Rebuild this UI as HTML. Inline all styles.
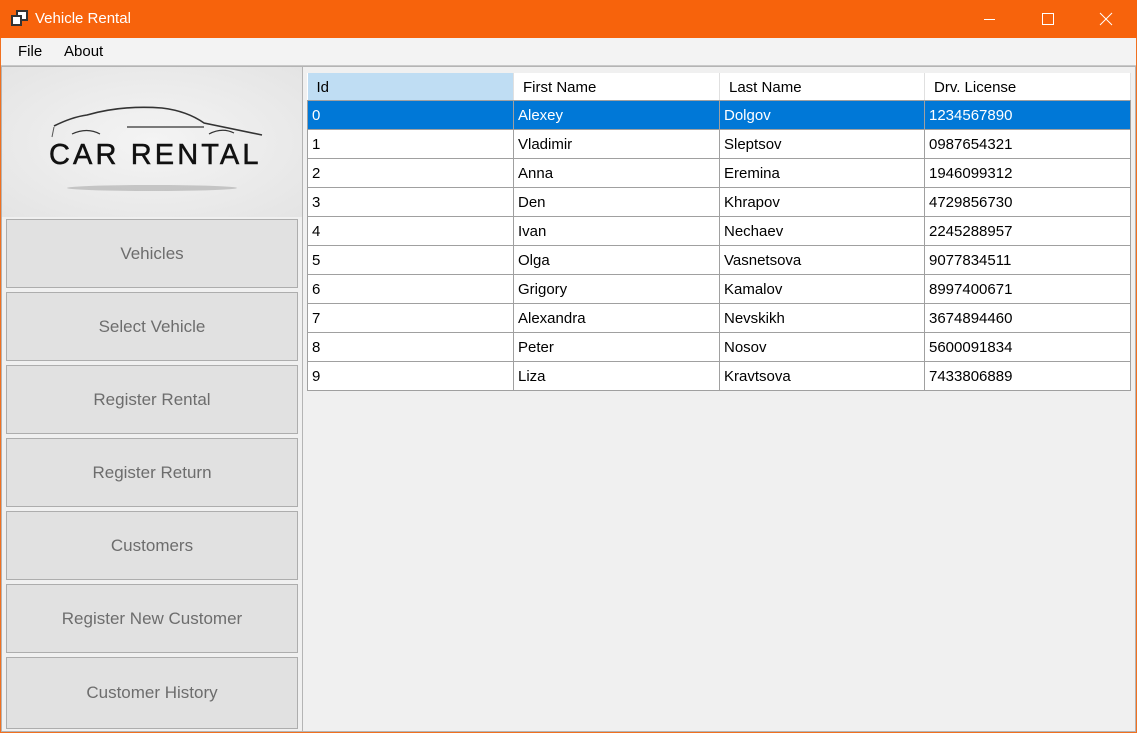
<!DOCTYPE html>
<html><head><style>
*{margin:0;padding:0;box-sizing:border-box}
body{width:1137px;height:733px;overflow:hidden;font-family:"Segoe UI","Liberation Sans",sans-serif;background:#f07020;position:relative}
.tb{position:absolute;left:0;top:0;width:1137px;height:38px;background:#f7630c;color:#fff;font-size:15px}
.menu{position:absolute;left:1px;top:38px;width:1135px;height:28px;background:#f3f3f3;font-size:15px;border-bottom:1px solid #c8c8c8}
.main{position:absolute;left:1px;top:66px;width:1135px;height:666px;background:#f0f0f0}
.left{position:absolute;left:0;top:0;width:302px;height:666px;border:1px solid #b4b4b4;background:#f0f0f0}
.logo{position:absolute;left:0;top:0;width:300px;height:150px;background:radial-gradient(ellipse at 50% 50%,#f4f4f4,#e4e4e4)}
.btn{position:absolute;left:4px;width:292px;height:69px;background:#e1e1e1;border:1px solid #adadad;color:#6d6d6d;font-size:17px;display:flex;align-items:center;justify-content:center}
.right{position:absolute;left:302px;top:0;width:833px;height:666px;border:1px solid #b4b4b4;border-left:none}
table{position:absolute;left:4px;top:6px;border-collapse:collapse;font-size:15px;background:#fff}
td{border:1px solid #a0a0a0;height:29px;padding:2px 4px 0;color:#000}
th{font-weight:normal;text-align:left;height:27px;padding:2px 9px 0;border-right:1px solid #e0e0e0;border-bottom:1px solid #a0a0a0;background:#fff}
tr.sel td{background:#0078d7;color:#fff}
</style></head><body>
<div class="tb">
<svg style="position:absolute;left:11px;top:10px" width="18" height="17"><rect x="6" y="1" width="10" height="9" fill="#fff" stroke="#333" stroke-width="2"/><rect x="1" y="6" width="9" height="9" fill="#fff" stroke="#333" stroke-width="2"/></svg>
<span style="position:absolute;left:35px;top:10px">Vehicle Rental</span>
<svg style="position:absolute;left:984px;top:12px" width="130" height="14" stroke="#fff" stroke-width="1" fill="none"><line x1="0" y1="7.5" x2="11" y2="7.5"/><rect x="58.5" y="1.5" width="11" height="11"/><line x1="116" y1="1" x2="128" y2="13"/><line x1="128" y1="1" x2="116" y2="13"/></svg>
</div>
<div class="menu"><span style="position:absolute;left:17px;top:5px">File</span><span style="position:absolute;left:63px;top:5px">About</span></div>
<div class="main">
<div class="left">
<div class="logo">
<svg width="300" height="150" style="position:absolute;left:0;top:0">
<path d="M52 59 Q70 50 85 48 Q120 38 160 41 Q185 44 202 56 L260 68" stroke="#333" stroke-width="1.6" fill="none"/>
<path d="M125 60 L202 60" stroke="#333" stroke-width="1.2" fill="none"/>
<path d="M52 60 L50 70" stroke="#555" stroke-width="1" fill="none"/>
<path d="M70 67 Q85 60 98 67 M207 67 Q220 60 232 66" stroke="#333" stroke-width="1.2" fill="none"/>
<ellipse cx="150" cy="121" rx="85" ry="3" fill="#aaa" opacity=".6"/>
<text x="47" y="97" font-family="Liberation Sans,sans-serif" font-size="29" letter-spacing="2.5" fill="#111" stroke="#111" stroke-width="0.5" textLength="212">CAR RENTAL</text>
</svg></div>
<div class="btn" style="top:152px">Vehicles</div>
<div class="btn" style="top:225px">Select Vehicle</div>
<div class="btn" style="top:298px">Register Rental</div>
<div class="btn" style="top:371px">Register Return</div>
<div class="btn" style="top:444px">Customers</div>
<div class="btn" style="top:517px">Register New Customer</div>
<div class="btn" style="top:590px;height:72px">Customer History</div>
</div>
<div class="right">
<table>
<tr><th style="width:206px;background:#bfddf3">Id</th><th style="width:206px">First Name</th><th style="width:205px">Last Name</th><th style="width:206px">Drv. License</th></tr>
<tr class="sel"><td>0</td><td>Alexey</td><td>Dolgov</td><td>1234567890</td></tr>
<tr><td>1</td><td>Vladimir</td><td>Sleptsov</td><td>0987654321</td></tr>
<tr><td>2</td><td>Anna</td><td>Eremina</td><td>1946099312</td></tr>
<tr><td>3</td><td>Den</td><td>Khrapov</td><td>4729856730</td></tr>
<tr><td>4</td><td>Ivan</td><td>Nechaev</td><td>2245288957</td></tr>
<tr><td>5</td><td>Olga</td><td>Vasnetsova</td><td>9077834511</td></tr>
<tr><td>6</td><td>Grigory</td><td>Kamalov</td><td>8997400671</td></tr>
<tr><td>7</td><td>Alexandra</td><td>Nevskikh</td><td>3674894460</td></tr>
<tr><td>8</td><td>Peter</td><td>Nosov</td><td>5600091834</td></tr>
<tr><td>9</td><td>Liza</td><td>Kravtsova</td><td>7433806889</td></tr>
</table>
</div>
</div>
</body></html>
